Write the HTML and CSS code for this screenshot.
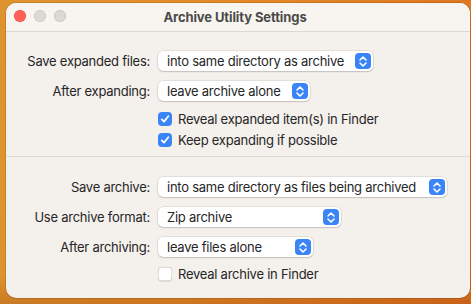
FILE: index.html
```html
<!DOCTYPE html>
<html lang="en">

<head>
  <meta charset="utf-8">
  <title>Archive Utility Settings</title>
  <link rel="stylesheet" href="styles.css">
</head>

<body>
<div class="window">

  <div class="titlebar">
    <div class="lights">
      <span class="light close"></span>
      <span class="light"></span>
      <span class="light"></span>
    </div>
    <div class="title">Archive Utility Settings</div>
  </div>

  <div class="section first">
    <div class="row">
      <div class="label">Save expanded files:</div>
      <div class="popup w-expand">into same directory as archive<span class="stepper"><svg width="10" height="13" viewBox="0 0 10 13"><path d="M2 5 L5 2 L8 5 M2 8 L5 11 L8 8" fill="none" stroke="white" stroke-width="1.6" stroke-linecap="round" stroke-linejoin="round"/></svg></span></div>
    </div>
    <div class="row">
      <div class="label">After expanding:</div>
      <div class="popup w-after">leave archive alone<span class="stepper"><svg width="10" height="13" viewBox="0 0 10 13"><path d="M2 5 L5 2 L8 5 M2 8 L5 11 L8 8" fill="none" stroke="white" stroke-width="1.6" stroke-linecap="round" stroke-linejoin="round"/></svg></span></div>
    </div>
    <div class="row check-row gap-top">
      <div class="label"></div>
      <div class="check"><span class="box on"><svg width="10" height="10" viewBox="0 0 10 10"><path d="M1.8 5.4 L4 7.6 L8.3 2.3" fill="none" stroke="white" stroke-width="1.8" stroke-linecap="round" stroke-linejoin="round"/></svg></span>Reveal expanded item(s) in Finder</div>
    </div>
    <div class="row check-row">
      <div class="label"></div>
      <div class="check"><span class="box on"><svg width="10" height="10" viewBox="0 0 10 10"><path d="M1.8 5.4 L4 7.6 L8.3 2.3" fill="none" stroke="white" stroke-width="1.8" stroke-linecap="round" stroke-linejoin="round"/></svg></span>Keep expanding if possible</div>
    </div>
  </div>

  <div class="section second">
    <div class="row">
      <div class="label">Save archive:</div>
      <div class="popup w-save">into same directory as files being archived<span class="stepper"><svg width="10" height="13" viewBox="0 0 10 13"><path d="M2 5 L5 2 L8 5 M2 8 L5 11 L8 8" fill="none" stroke="white" stroke-width="1.6" stroke-linecap="round" stroke-linejoin="round"/></svg></span></div>
    </div>
    <div class="row">
      <div class="label">Use archive format:</div>
      <div class="popup w-format">Zip archive<span class="stepper"><svg width="10" height="13" viewBox="0 0 10 13"><path d="M2 5 L5 2 L8 5 M2 8 L5 11 L8 8" fill="none" stroke="white" stroke-width="1.6" stroke-linecap="round" stroke-linejoin="round"/></svg></span></div>
    </div>
    <div class="row">
      <div class="label">After archiving:</div>
      <div class="popup w-archiving">leave files alone<span class="stepper"><svg width="10" height="13" viewBox="0 0 10 13"><path d="M2 5 L5 2 L8 5 M2 8 L5 11 L8 8" fill="none" stroke="white" stroke-width="1.6" stroke-linecap="round" stroke-linejoin="round"/></svg></span></div>
    </div>
    <div class="row check-row gap-small">
      <div class="label"></div>
      <div class="check"><span class="box"></span>Reveal archive in Finder</div>
    </div>
  </div>

</div>
</body>

</html>
```

FILE: styles.css
```css
body {
  margin: 0;
  padding: 3px 1px 0 6px;
  width: 464px;
  height: 304px;
  overflow: hidden;
  font-family: Inter, "Liberation Sans", sans-serif;
  font-size: 13px;
  letter-spacing: -0.25px;
  color: #262626;
  background:
    linear-gradient(180deg, rgba(0, 0, 0, 0) 90%, rgba(120, 40, 0, 0.25) 100%),
    linear-gradient(100deg, #df9430 0%, #e48a28 45%, #df721f 100%);
}

/* Window */

.window {
  width: 464px;
  height: 295px;
  background: #f4f0ec;
  border-radius: 10px;
  overflow: hidden;
  box-shadow: 0 0 0 0.5px rgba(0, 0, 0, 0.25);
}

.titlebar {
  position: relative;
  height: 28px;
  background: #f8f5f0;
  border-bottom: 1px solid #dcd8d3;
  display: flex;
  align-items: center;
  justify-content: center;
}

.lights {
  position: absolute;
  left: 8px;
  top: 7px;
  display: flex;
  gap: 8px;
}

.light {
  width: 12px;
  height: 12px;
  border-radius: 50%;
  background: #dcd9d5;
  box-shadow: inset 0 0 0 0.5px rgba(0, 0, 0, 0.15);
}

.light.close { background: #fe5f57; box-shadow: inset 0 0 0 0.5px rgba(200, 40, 30, 0.4); }

.title {
  font-weight: 700;
  color: #4a4a4a;
  margin-left: -6px;
  letter-spacing: -0.1px;
}

/* Sections */

.section.first {
  padding: 19px 0 6px 0;
  border-bottom: 1px solid #dedad5;
}

.section.second {
  padding: 20px 0 0 0;
}

.row {
  display: grid;
  grid-template-columns: 144px auto;
  column-gap: 8px;
  align-items: center;
  height: 20px;
  margin-bottom: 10px;
}

.row.check-row { height: 21px; margin-bottom: 0; }
.row.gap-top { margin-top: -3px; }
.row.gap-small { margin-top: -4px; }

.label {
  text-align: right;
  white-space: nowrap;
}

/* Popup buttons */

.popup {
  position: relative;
  height: 20px;
  box-sizing: border-box;
  padding-left: 9px;
  display: flex;
  align-items: center;
  background: white;
  border-radius: 5px;
  box-shadow: 0 0 0 0.5px rgba(0, 0, 0, 0.14), 0 1px 1.5px rgba(0, 0, 0, 0.14);
  white-space: nowrap;
}

.w-expand { width: 215px; }
.w-after { width: 152px; }
.w-save { width: 289px; }
.w-format { width: 183px; }
.w-archiving { width: 155px; }

.stepper {
  position: absolute;
  right: 2px;
  top: 2px;
  width: 16px;
  height: 16px;
  border-radius: 4px;
  background: #3a84f7;
  display: flex;
  align-items: center;
  justify-content: center;
}

/* Checkboxes */

.check {
  display: flex;
  align-items: center;
  white-space: nowrap;
}

.box {
  width: 14px;
  height: 14px;
  box-sizing: border-box;
  border-radius: 4px;
  margin-right: 6px;
  background: white;
  box-shadow: inset 0 0 0 0.5px rgba(0, 0, 0, 0.25), 0 0.5px 1px rgba(0, 0, 0, 0.1);
  display: flex;
  align-items: center;
  justify-content: center;
}

.box.on {
  background: #3a84f7;
  box-shadow: none;
}
```
